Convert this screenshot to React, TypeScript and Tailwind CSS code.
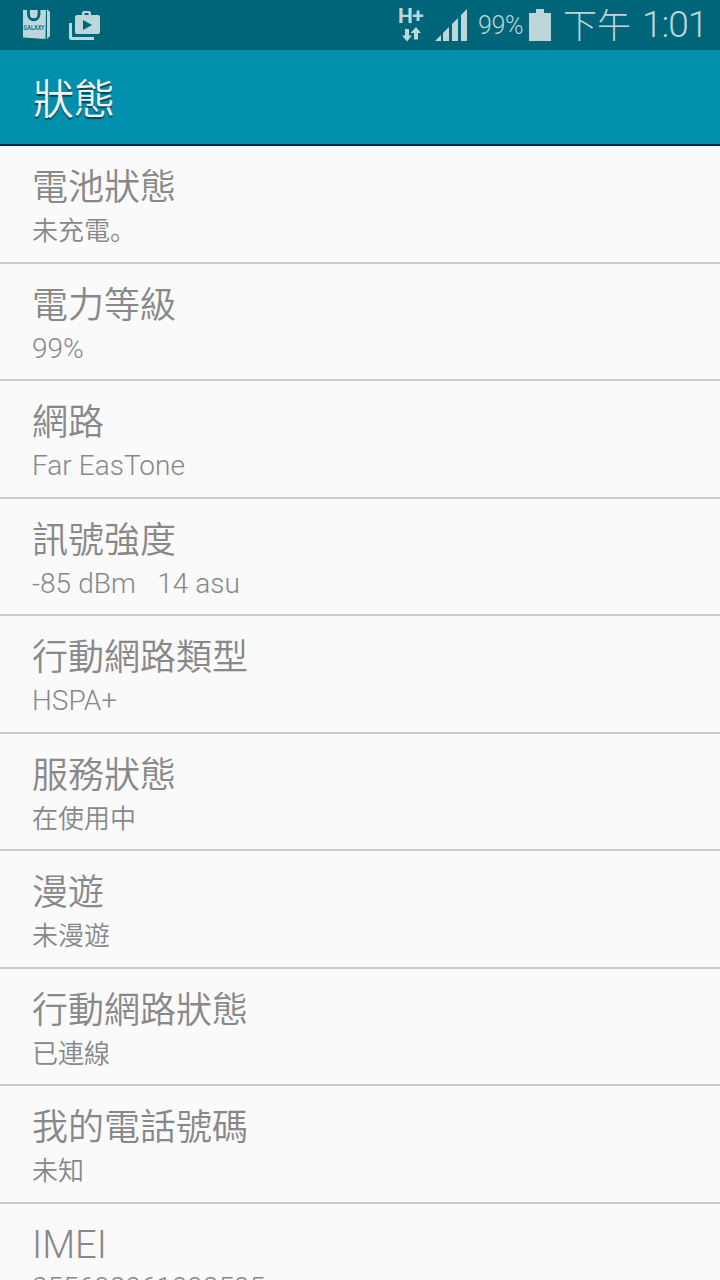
interface StatusItem {
  title: string;
  value: string;
  latinTitle?: boolean;
  latinValue?: boolean;
}

const items: StatusItem[] = [
  { title: '電池狀態', value: '未充電。' },
  { title: '電力等級', value: '99%', latinValue: true },
  { title: '網路', value: 'Far EasTone', latinValue: true },
  { title: '訊號強度', value: '-85 dBm   14 asu', latinValue: true },
  { title: '行動網路類型', value: 'HSPA+', latinValue: true },
  { title: '服務狀態', value: '在使用中' },
  { title: '漫遊', value: '未漫遊' },
  { title: '行動網路狀態', value: '已連線' },
  { title: '我的電話號碼', value: '未知' },
  { title: 'IMEI', value: '355698061098595', latinTitle: true, latinValue: true },
];

function GalaxyBagIcon() {
  return (
    <svg width="28" height="32" viewBox="0 0 28 32">
      <path d="M0 2H23L22.5 31L0 29.5Z" fill="#bcd6da" />
      <path d="M24 1L27 4V28L24 31Z" fill="#bcd6da" />
      <path d="M5.5 2V6.5A5.2 5.2 0 0 0 16 6.5V2" fill="none" stroke="#006579" strokeWidth="2.8" />
      <text
        x="0.5"
        y="21.8"
        fontSize="7.5"
        fontWeight="500"
        textLength="21"
        lengthAdjust="spacingAndGlyphs"
        fill="#006579"
        fontFamily="Roboto, sans-serif"
      >
        GALAXY
      </text>
    </svg>
  );
}

function PlayStoreIcon() {
  return (
    <svg width="32" height="30" viewBox="0 0 32 30">
      <path d="M1.5 12V26.5Q1.5 27.5 2.5 27.5H25" fill="none" stroke="#bcd6da" strokeWidth="3" />
      <path
        fillRule="evenodd"
        d="M8 4H13V2Q13 0 15 0H20Q22 0 22 2V4H29Q31 4 31 6V21Q31 23 29 23H8Q6 23 6 21V6Q6 4 8 4ZM15.5 2V4H19.5V2ZM14 9V19L23 14Z"
        fill="#bcd6da"
      />
    </svg>
  );
}

function DataArrowsIcon() {
  return (
    <svg width="20" height="15" viewBox="0 0 20 15" fill="#bcd6da">
      <path d="M3 2H7V8.5H10L5 14.5L0 8.5H3Z" />
      <path d="M12 12.5V6H8.5L14 0L19 6H16V12.5Z" />
    </svg>
  );
}

function SignalIcon() {
  return (
    <svg width="32" height="32" viewBox="0 0 32 32" fill="#bcd6da">
      <path d="M0 32L6 26V32Z" />
      <path d="M8 24L14 18V32H8Z" />
      <path d="M17 15L23 9V32H17Z" />
      <path d="M26 6L32 0V32H26Z" />
    </svg>
  );
}

function BatteryIcon() {
  return (
    <svg width="22" height="32" viewBox="0 0 22 32" fill="#bcd6da">
      <path d="M0 4H7V0H15V4H22V32H0Z" />
    </svg>
  );
}

function StatusBar() {
  return (
    <div className="flex h-[50px] shrink-0 items-start bg-[#006579] text-[#bcd6da]">
      <div className="pt-[8px] pl-[23px]">
        <GalaxyBagIcon />
      </div>
      <div className="pt-[11px] pl-[18px]">
        <PlayStoreIcon />
      </div>
      <div className="ml-auto flex w-[26px] flex-col pt-[7px]">
        <span className="h-[20px] text-[21px] leading-[19px] font-bold tracking-[-0.5px] whitespace-nowrap">H+</span>
        <div className="pl-[4px]">
          <DataArrowsIcon />
        </div>
      </div>
      <div className="pt-[9px] pl-[11px]">
        <SignalIcon />
      </div>
      <span className="w-[62px] pt-[10px] pl-[11px] text-[25px] leading-[32px] font-[350] tracking-[-0.4px] whitespace-nowrap">
        99%
      </span>
      <div className="pt-[9px]">
        <BatteryIcon />
      </div>
      <span className="w-[91px] pt-[6px] pl-[12px] text-[34px] leading-[40px] font-light whitespace-nowrap">下午</span>
      <span className="w-[78px] pt-[5px] text-[37px] leading-[40px] font-light tracking-[-1px] whitespace-nowrap">
        1:01
      </span>
    </div>
  );
}

export default function App() {
  return (
    <div className="flex h-[1280px] w-[720px] flex-col overflow-hidden bg-[#fafafa] font-[Roboto,'Noto_Sans_CJK_SC',sans-serif]">
      <StatusBar />
      <div className="h-[96px] shrink-0 border-b-2 border-[#002c4b] bg-[#0090ae] pt-[26px] pl-[33px]">
        <h1 className="text-[41px] leading-[48px] font-[350] text-[#f5f5f5] [text-shadow:0_2px_1px_rgba(0,0,0,0.5)]">
          狀態
        </h1>
      </div>
      <div className="flex flex-col text-[#888888]">
        {items.map((item) => (
          <div key={item.title} className="h-[117.5px] shrink-0 border-b-2 border-[#c5ced6] pt-[16px] pl-[32px]">
            <div
              className={
                item.latinTitle
                  ? 'h-[45px] pt-[3px] text-[38px] leading-[44px] font-light'
                  : "h-[45px] font-['Noto_Sans_CJK_SC'] text-[36px] leading-[44px] font-[350]"
              }
            >
              {item.title}
            </div>
            <div
              className={
                item.latinValue
                  ? `h-[46px] text-[28px] leading-[44px] font-light whitespace-pre [word-spacing:0.3px] ${item.latinTitle ? 'pt-[1px]' : 'pt-[2px]'}`
                  : "h-[44px] font-['Noto_Sans_CJK_SC'] text-[26px] leading-[44px] font-[350]"
              }
            >
              {item.value}
            </div>
          </div>
        ))}
      </div>
    </div>
  );
}
